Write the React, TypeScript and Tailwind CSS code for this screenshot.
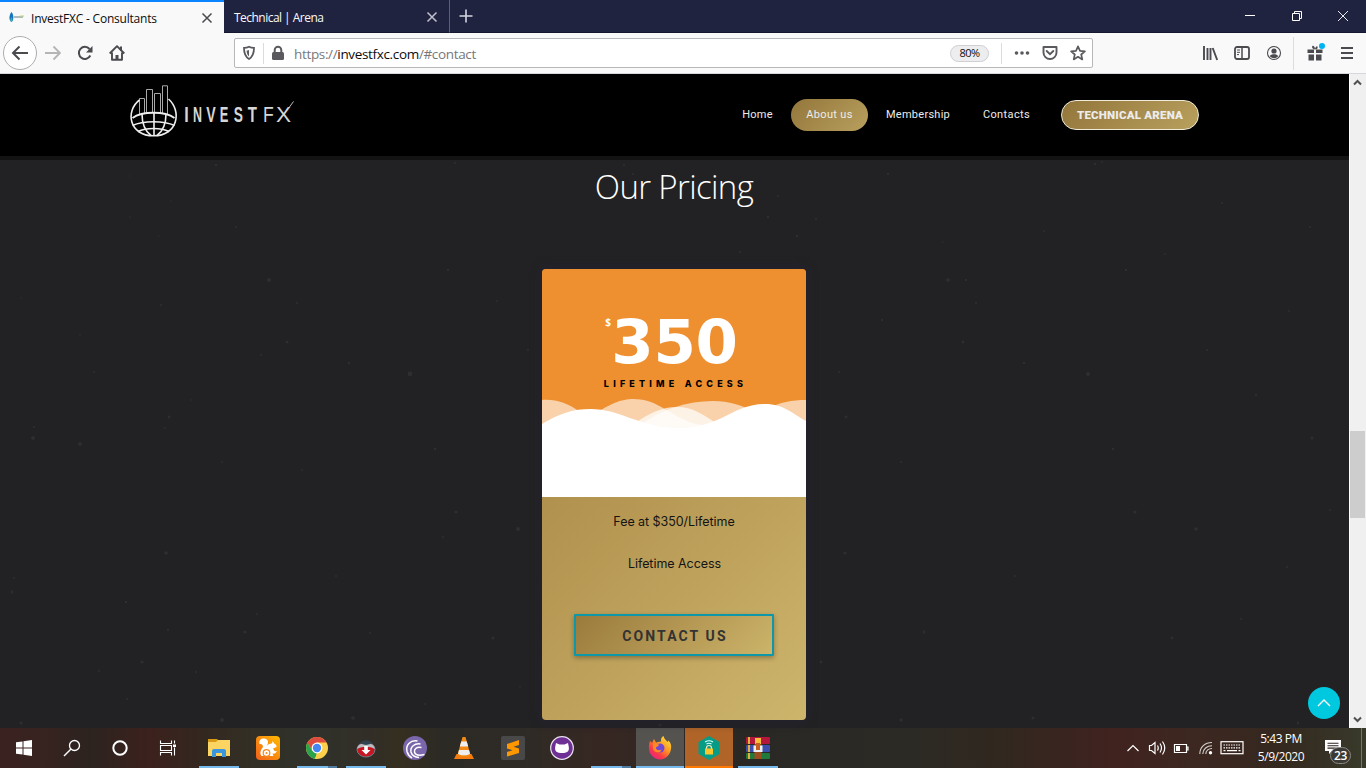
import type { ReactNode } from "react";

const specks: [number, number, number][] = [
  [216, 5, 1.2], [455, 3, 1], [236, 67, 1], [130, 57, 0.8], [130, 16, 0.7], [159, 76, 0.8], [171, 41, 0.7], [269, 120, 2.1],
  [297, 143, 1], [287, 182, 1.5], [448, 110, 1.2], [497, 141, 0.9], [528, 190, 1], [410, 214, 2.4], [349, 203, 1.2],
  [261, 195, 1], [161, 145, 1], [80, 175, 0.8], [21, 138, 0.8], [94, 212, 1], [33, 278, 1.9], [34, 267, 1], [80, 284, 1.9],
  [169, 257, 1.4], [165, 268, 0.9], [191, 240, 0.8], [222, 302, 0.9], [435, 289, 1.3], [302, 310, 0.9], [456, 352, 1.6],
  [518, 369, 2.1], [443, 377, 1], [166, 393, 1.8], [14, 418, 1], [12, 432, 1.4], [126, 442, 1.2], [336, 416, 1],
  [245, 472, 1.6], [168, 470, 1.1], [493, 478, 1.5], [370, 473, 1], [142, 502, 1.6], [99, 511, 1], [127, 539, 1.1],
  [222, 560, 2.1], [353, 558, 1.8], [21, 563, 1.6], [425, 544, 1], [196, 512, 1.1], [520, 527, 0.8], [257, 454, 0.9],
  [624, 5, 1], [633, 14, 1], [768, 57, 1.3], [797, 76, 1.3], [740, 92, 1], [659, 723, 1.3], [778, 36, 1],
  [816, 59, 1], [888, 14, 1.2], [943, 82, 0.8], [966, 120, 1.2], [1044, 71, 0.9], [1095, 4, 1.2], [1102, 2, 0.9],
  [1222, 43, 1.1], [1165, 94, 0.9], [1310, 67, 1], [882, 160, 1.1], [948, 120, 1.8], [976, 143, 1.1], [963, 182, 1.4],
  [1126, 110, 1.2], [1088, 214, 2], [1024, 203, 1.2], [1207, 190, 1.1], [1289, 151, 0.9], [1256, 235, 1.1], [1312, 278, 1.6],
  [839, 212, 1], [846, 257, 1.4], [901, 302, 1], [1113, 289, 1.2], [1135, 352, 1.5], [1196, 369, 1.8], [845, 393, 1.6],
  [1015, 416, 1], [924, 472, 1.4], [1172, 478, 1.4], [821, 502, 1.4], [1033, 558, 1.6], [901, 560, 1.7], [1298, 563, 1.4],
  [1241, 459, 1], [1287, 407, 1], [1330, 350, 1], [660, 565, 1.6],
];

const Svg = ({ w, h = w, vb, className = "", children }: { w: number; h?: number; vb?: string; className?: string; children: ReactNode }) => (
  <svg width={w} height={h} viewBox={vb ?? `0 0 ${w} ${h}`} fill="none" className={`block shrink-0 ${className}`}>{children}</svg>
);

function TabBar() {
  return (
    <div className="flex h-[33px] bg-[#202340] font-['Open_Sans',sans-serif] text-[12px]">
      <div className="flex h-full w-[224px] items-center border-t-2 border-[#0a84ff] bg-[#f9f9f9] pl-[9px] text-[#0c0c0d]">
        <Svg w={16}>
          <path d="M2.500 2C5 5 5 10 2.500 12C-.5 10 0 5 2.500 2Z" fill="#1673bd" />
          <path d="M2.500 7C4 9 3.500 11 2.500 12C1 11 1 9 2.500 7Z" fill="#35b6a5" />
          <path d="M5 7H14" stroke="#93a7ae" strokeWidth="1.500" />
          <path d="M11 6H15" stroke="#b9dc6a" strokeWidth="1" />
        </Svg>
        <span className="ml-[6px] w-[168px] whitespace-nowrap pt-[2px] tracking-[-0.22px]">InvestFXC - Consultants</span>
        <Svg w={16}><path d="M3.500 3.500l9 9M12.500 3.500l-9 9" stroke="#4a4a4f" strokeWidth="1.500" /></Svg>
      </div>
      <div className="flex h-full w-[226px] items-center border-b border-r border-b-[#15172e] border-r-[#5c5e78] pl-[10px] pt-px text-[#f9f9fa]">
        <span className="w-[190px] whitespace-nowrap pt-[2px] tracking-[-0.53px]">Technical | Arena</span>
        <Svg w={16}><path d="M3.500 3.500l9 9M12.500 3.500l-9 9" stroke="#c0c1cc" strokeWidth="1.500" /></Svg>
      </div>
      <div className="flex grow items-center border-b border-[#15172e] pl-2">
        <Svg w={16}><path d="M8 1.500v13M1.500 8h13" stroke="#d5d5de" strokeWidth="1.600" /></Svg>
      </div>
      <div className="flex w-[139px] items-center border-b border-[#15172e] text-white">
        <div className="flex w-[46px] justify-center"><Svg w={12}><path d="M1 5.500h10" stroke="#fff" /></Svg></div>
        <div className="flex w-[47px] justify-center"><Svg w={12}><path d="M1.500 3.500h7v7h-7zM3.500 3.500v-2h7v7h-2" stroke="#fff" /></Svg></div>
        <div className="flex w-[46px] justify-center"><Svg w={12}><path d="M1 1l10 10M11 1L1 11" stroke="#fff" strokeWidth=".9" /></Svg></div>
      </div>
    </div>
  );
}

function Toolbar() {
  return (
    <div className="flex h-[41px] items-center border-b border-[#d7d7db] bg-[#f9f9f9] pl-[3px] font-['Open_Sans',sans-serif]">
      <div className="flex h-[34px] w-[34px] items-center justify-center rounded-full border border-[#adadb0] bg-white">
        <Svg w={18}><path d="M17 9H2.500M8.500 2.500L2 9l6.500 6.500" stroke="#4a4a4f" strokeWidth="2" /></Svg>
      </div>
      <Svg w={16} className="ml-[8px]"><path d="M0 8h15M8.500 1.500L15 8l-6.500 6.500" stroke="#b5b5b8" strokeWidth="1.900" /></Svg>
      <Svg w={16} className="ml-[16px]">
        <path d="M13.300 10.500A6 6 0 1 1 12.500 4" stroke="#4a4a4f" strokeWidth="2" />
        <path d="M15.500 1v6.500H9z" fill="#4a4a4f" />
      </Svg>
      <Svg w={16} className="ml-[16px]">
        <path d="M.7 8.500L8 1.200l7.300 7.300M3 7.500V14.700h10V7.500" stroke="#4a4a4f" strokeWidth="1.900" strokeLinejoin="round" />
        <path d="M6.500 14.500V10h3v4.500zM11 1.500h2v4h-2z" fill="#4a4a4f" />
      </Svg>
      <div className="ml-[109px] flex h-[30px] w-[859px] items-center rounded-[2px] border border-[#b8b8bb] bg-white pl-[6px]">
        <Svg w={16}>
          <path d="M8 1.800c1.800.9 3.200 1.100 5 1.100 0 5-.8 8.500-5 11-4.200-2.500-5-6-5-11 1.800 0 3.200-.2 5-1.100z" stroke="#5a5a5e" strokeWidth="1.800" />
          <path d="M8 5c-.9.400-1.700.5-2.400.5.1 2.600.6 4.400 2.400 5.900z" fill="#5a5a5e" />
        </Svg>
        <div className="ml-[6px] h-[21px] w-px bg-[#dcdcdf]" />
        <Svg w={16} className="ml-[6px]">
          <rect x="2" y="7" width="12" height="8" rx="1.500" fill="#5a5a5e" />
          <path d="M4.700 8V5a3.300 3.300 0 0 1 6.600 0v3" stroke="#5a5a5e" strokeWidth="2" />
        </Svg>
        <span className="ml-[8px] grow whitespace-nowrap pt-[2px] text-[13.500px] tracking-[-0.34px] text-[#77777b]">https://<span className="text-[#0c0c0d]">investfxc.com</span>/#contact</span>
        <span className="mr-[12px] flex h-[17px] w-[39px] items-center justify-center rounded-full border border-[#cfcfd2] bg-[#ededf0] pt-px text-[11px] tracking-[-0.5px] text-[#0c0c0d]">80%</span>
        <div className="h-[21px] w-px bg-[#dcdcdf]" />
        <Svg w={18} className="ml-[10px]">
          <circle cx="4.500" cy="9" r="1.800" fill="#5a5a5e" /><circle cx="10" cy="9" r="1.800" fill="#5a5a5e" /><circle cx="15.500" cy="9" r="1.800" fill="#5a5a5e" />
        </Svg>
        <Svg w={16} className="ml-[12px]">
          <path d="M1.500 2h13v5.500a6.500 6.500 0 0 1-13 0z" stroke="#5a5a5e" strokeWidth="1.900" strokeLinejoin="round" />
          <path d="M4.700 6L8 9.200 11.300 6" stroke="#5a5a5e" strokeWidth="1.900" strokeLinecap="round" />
        </Svg>
        <Svg w={16} className="ml-[12px] mr-[6px]">
          <path d="M8 1.300l2 4.500 4.900.5-3.700 3.200 1.100 4.900L8 11.800l-4.300 2.600 1.100-4.900L1.100 6.300 6 5.800z" stroke="#5a5a5e" strokeWidth="1.700" strokeLinejoin="round" />
        </Svg>
      </div>
      <Svg w={16} className="ml-[109px]"><path d="M2 1v14M5.500 3v12M8.500 3v12M10.700 3l4.500 12" stroke="#4a4a4f" strokeWidth="1.900" /></Svg>
      <Svg w={16} className="ml-[16px]">
        <rect x="1" y="2" width="14" height="12" rx="2" stroke="#4a4a4f" strokeWidth="1.800" />
        <path d="M8 2v12" stroke="#4a4a4f" strokeWidth="1.500" /><path d="M3 5h3M3 7.300h3M3 9.600h2" stroke="#4a4a4f" />
      </Svg>
      <Svg w={16} className="ml-[16px]">
        <circle cx="8" cy="8" r="6.500" stroke="#4a4a4f" strokeWidth="1.100" />
        <circle cx="8" cy="6" r="2.600" fill="#4a4a4f" /><path d="M3.700 11C5 9.500 6.500 9.200 8 9.200s3 .3 4.300 1.800C11 12.700 9.500 13.200 8 13.200S5 12.700 3.700 11z" fill="#4a4a4f" />
      </Svg>
      <div className="ml-[11px] h-[33px] w-px bg-[#dcdcdf]" />
      <Svg w={24} className="ml-[9px]">
        <path d="M4.500 8.500h6.500v3.500H4.500zM13 8.500h6.500v3.500H13zM5.500 13.500H11V19.500H5.500zM13 13.500h5.500v6H13z" fill="#4a4a4f" />
        <path d="M12 8.500C10 8.500 8.500 6.500 9.300 5.300S12 5.500 12 8.500zM12 8.500c2 0 3-1.500 2.600-2.800s-2.600 0-2.600 2.800z" fill="#4a4a4f" />
        <circle cx="19" cy="5" r="3" fill="#00b3f4" />
      </Svg>
      <Svg w={16} className="ml-[12px]"><path d="M2 3h12M2 8h12M2 13h12" stroke="#4a4a4f" strokeWidth="2" /></Svg>
    </div>
  );
}

function Logo() {
  return (
    <svg width="170" height="60" viewBox="0 0 170 60" className="block shrink-0" fill="none">
      <path d="M9.500 30V14.500h5V29M16.500 29V5.500h6V29M24.500 29V9.500h6V29M32.500 30V1.800h5V31" stroke="#a9a9a9" strokeWidth="1" />
      <path d="M9.500 16C-5 27-1 51.800 23.500 51.800S52 27 38.500 15" stroke="#eee" strokeWidth="1.600" />
      <path d="M2.500 34C12 27 35 27 44.500 34" stroke="#eee" strokeWidth="1.800" />
      <path d="M2.500 41.500C13 36.500 34 36.500 44.500 41.500M8 47.500c8-4 23-4 31 0" stroke="#eee" strokeWidth="1.500" />
      <path d="M24 29v22.500M12 30c0 9 3 17 9 21.500M36 30c0 9-3 17-9 21.500" stroke="#eee" strokeWidth="1.600" />
      <g fill="#d6d6d6" fontFamily="Liberation Sans Narrow, Liberation Sans, sans-serif">
        <g fontWeight="700" fontSize="21.500" textAnchor="middle">
          <text transform="translate(56.500 38) scale(.75 1)">I</text>
          <text transform="translate(67.500 38) scale(.58 1)">N</text>
          <text transform="translate(81 38) scale(.66 1)">V</text>
          <text transform="translate(94 38) scale(.6 1)">E</text>
          <text transform="translate(108.500 38) scale(.64 1)">S</text>
          <text transform="translate(122.500 38) scale(.7 1)">T</text>
        </g>
        <text transform="translate(133 38) scale(.82 1)" fontSize="21.500">F</text>
        <text transform="translate(146 38) scale(1.050 1)" fontSize="21.500">X</text>
      </g>
      <path d="M158 25l5.500-7.500" stroke="#bdbdbd" strokeWidth="1" />
    </svg>
  );
}

function Header() {
  return (
    <header className="flex h-[86px] items-start border-b-4 border-[#131314] bg-black pl-[130px] font-[Roboto,sans-serif] text-[11px] tracking-[0.2px] text-[#ececec]">
      <div className="mt-[10px] w-[596px]"><Logo /></div>
      <nav className="mt-[25px] flex h-8 items-center">
        <a className="w-[65px] pr-[2px] pt-px text-center tracking-[0.25px]">Home</a>
        <a className="flex h-8 w-[77px] items-center justify-center rounded-full bg-linear-135 from-[#93763b] to-[#b8a05e] pt-px tracking-[0.35px]">About us</a>
        <a className="w-[100px] pt-px text-center tracking-[0.27px]">Membership</a>
        <a className="w-[78px] pr-px pt-px text-center tracking-[0.38px]">Contacts</a>
        <a className="ml-[15px] flex h-[30px] w-[138px] items-center justify-center rounded-full border border-[#f0ead8] bg-linear-135 from-[#93763b] to-[#b8a05e] pt-px text-[11.500px] font-black tracking-[0.2px]">TECHNICAL ARENA</a>
      </nav>
    </header>
  );
}

function PricingCard() {
  return (
    <div className="mt-[57px] flex h-[451px] w-[264px] flex-col overflow-hidden rounded-[4px] bg-linear-135 from-[#a3803f] to-[#cdb56c] shadow-[0_0_10px_2px_#24222f]">
      <div className="relative flex h-[228px] shrink-0 flex-col items-center bg-[#ef9030]">
        <svg width="264" height="100" viewBox="0 128 264 100" className="absolute bottom-0 left-0 block" fill="#fff">
          <path d="M0 131C14 130 25 134 38 143V170H0z" opacity=".6" />
          <path d="M45 150C68 134 80 130 91 130C112 130 122 141 137 148C147 153 154 156 163 156L160 170H45z" opacity=".6" />
          <path d="M93 154C108 144 120 138 135 138S161 145 178 157V170H93z" opacity=".7" />
          <path d="M95 158C120 140 145 132 171 132C187 132 200 136 212 143V170H95z" opacity=".6" />
          <path d="M225 140C238 133 250 131 264 131V160H225z" opacity=".6" />
          <path d="M0 155C18 144 32 140 48 140C80 140 95 158 136 159C180 159 190 135 223 135C242 135 251 145 264 152V228H0z" />
        </svg>
        <div className="mt-[37px] flex h-[72px] items-start pr-[5px] text-white">
          <span className="mt-[9px] w-[6px] font-['Noto_Sans',sans-serif] text-[10px] font-bold leading-[14px]">$</span>
          <span className="font-['DejaVu_Sans',sans-serif] text-[61px] font-bold leading-[72px] tracking-[-0.3px]">350</span>
        </div>
        <div className="whitespace-nowrap pl-[3px] font-[Inter,sans-serif] text-[9px] font-extrabold leading-[12px] tracking-[4.200px] text-black">LIFETIME ACCESS</div>
      </div>
      <div className="flex flex-col items-center pt-[15px] font-[Inter,sans-serif] text-[12.500px] leading-[20px] text-[#141414]">
        <span className="tracking-[-0.05px]">Fee at $350/Lifetime</span>
        <span className="mt-[22px] pl-px tracking-[-0.05px]">Lifetime Access</span>
        <button className="mt-[40px] flex h-[42px] w-[200px] items-center justify-center rounded-[1px] border-2 border-[#0d97a8] bg-linear-135 from-[#9b7b3c] to-[#ccb46a] pl-[2px] pt-px font-[Roboto,sans-serif] text-[14px] font-bold tracking-[2.100px] text-[#333] shadow-[0_2px_5px_rgba(0,0,0,.3)]">CONTACT US</button>
      </div>
    </div>
  );
}

function Page() {
  return (
    <div className="flex h-[654px]">
      <div className="relative flex w-[1349px] flex-col bg-[#222224]">
        <Header />
        <main className="relative flex grow flex-col items-center pr-px">
          <svg width="1349" height="568" viewBox="0 0 1349 568" className="absolute left-0 top-0" fill="#35363a">
            {specks.map(([x, y, r], i) => <circle key={i} cx={x} cy={y} r={r} opacity={0.65} />)}
          </svg>
          <h1 className="relative mt-[2px] whitespace-nowrap font-['Open_Sans',sans-serif] text-[33px] font-light leading-[50px] tracking-[-0.65px] text-white">Our Pricing</h1>
          <div className="relative"><PricingCard /></div>
        </main>
        <div className="absolute bottom-[9px] right-[9px] flex h-8 w-8 items-center justify-center rounded-full bg-[#00c8de]">
          <Svg w={16}><path d="M2 11l6-6 6 6" stroke="#fff" strokeWidth="1.400" /></Svg>
        </div>
      </div>
      <div className="flex w-[17px] flex-col items-center border-l border-white bg-[#f0f0f0] pr-px">
        <Svg w={9} className="mt-[4px]"><path d="M1 6.500L4.500 3 8 6.500" stroke="#505050" strokeWidth="2" /></Svg>
        <div className="mt-[344px] h-[87px] w-[15px] bg-[#cdcdcd]" />
        <Svg w={9} className="mb-[4px] mt-auto"><path d="M1 2.500L4.500 6 8 2.500" stroke="#505050" strokeWidth="2" /></Svg>
      </div>
    </div>
  );
}

function Slot({ children, className = "", line = "" }: { children?: ReactNode; className?: string; line?: string }) {
  return (
    <div className={`mr-px flex h-10 w-12 shrink-0 flex-col items-center ${className}`}>
      <div className="flex h-[38px] items-center pt-[2px]">{children}</div>
      {line === "split" ? (
        <div className="flex h-[2px] w-10"><div className="w-[31px] bg-[#76b9ed]" /><div className="w-[9px] bg-[#4f7c9e]" /></div>
      ) : <div className={`h-[2px] ${line}`} />}
    </div>
  );
}

function Taskbar() {
  return (
    <div className="flex h-10 bg-[linear-gradient(90deg,#3a2220_0px,#382320_40px,#2c231f_90px,#3c211d_150px,#33271f_200px,#332e24_240px,#2f322b_310px,#322e27_370px,#352f20_400px,#2c2a24_440px,#2e2b26_520px,#372722_600px,#2a2825_740px,#2b2a25_900px,#31281f_1000px,#40221f_1110px,#3d2721_1190px,#34281f_1280px,#383a2a_1366px)] font-['Open_Sans',sans-serif]">
      <div className="flex w-12 items-center justify-center"><Svg w={16}><path d="M0 2.300l6.500-.9V7.500H0zM7.500 1.200L16 0v7.500H7.500zM0 8.500h6.500v6.100L0 13.700zM7.500 8.500H16V16l-8.500-1.200z" fill="#fff" /></Svg></div>
      <div className="flex w-12 items-center justify-center"><Svg w={18}><circle cx="11.500" cy="6.500" r="5" stroke="#fff" strokeWidth="1.300" /><path d="M8 10L1 17" stroke="#fff" strokeWidth="1.400" /></Svg></div>
      <div className="flex w-12 items-center justify-center"><Svg w={16}><circle cx="8" cy="8" r="6.700" stroke="#fff" strokeWidth="2" /></Svg></div>
      <div className="mr-[3px] flex w-12 items-center justify-center"><Svg w={18}><path d="M1.500 1.500v3h11v-3M1.500 16.500v-3h11v3M1.500 6.500h11v5h-11zM15.500 1.500v3M15.500 8.500v8" stroke="#fff" strokeWidth="1.100" /><path d="M14 5.500h3v2.500h-3z" fill="#fff" /></Svg></div>
      <Slot line="w-10 bg-[#76b9ed]">
        <Svg w={22} h={20}><path d="M0 1h9l2 2v4H0z" fill="#d79b16" /><path d="M0 4h8l2-2h12v16H0z" fill="#fcd462" /><path d="M4 19v-6q0-2 2-2h10q2 0 2 2v6h-4v-4H8v4z" fill="#3a96dd" /></Svg>
      </Slot>
      <Slot>
        <Svg w={24}>
          <defs><linearGradient id="uc" x1="0" y1="1" x2="1" y2="0"><stop stopColor="#f2601b" /><stop offset="1" stopColor="#ffba00" /></linearGradient></defs>
          <rect width="24" height="24" rx="4" fill="url(#uc)" />
          <path d="M3.500 8C2.500 4 5.500 2 8.500 2.500c4 .7 4.500 4 2 8C12 8 14 7.300 16 7.500l.7-2.500 1.500 2.500c2 .8 2.500 2 2.300 3.500l-3.500 1.500c1 2 1.500 3 4 2.500-1 2-2.500 3-4.500 2.500l1 2.500H5.500c-2-2.500-1-6 1.500-9C7 8.500 5.500 7.500 3.500 8z" fill="#fff" />
          <circle cx="10.500" cy="17" r="3.300" stroke="#f78a20" strokeWidth="1.300" /><circle cx="10.500" cy="17" r="1" fill="#f78a20" />
        </Svg>
      </Slot>
      <Slot line="split">
        <Svg w={22}>
          <circle cx="11" cy="11" r="11" fill="#fcd04b" />
          <path d="M1.500 5.500A11 11 0 0 1 20.500 5.500H11L6.300 13.700z" fill="#dd4b3e" />
          <path d="M1.500 5.500L6.300 13.700 11 16.500 9 21.800A11 11 0 0 1 1.500 5.500z" fill="#2ba24c" />
          <path d="M11 16l4.500-2.500L11 22H9z" fill="#fcd04b" />
          <circle cx="11" cy="11" r="5.400" fill="#fff" /><circle cx="11" cy="11" r="4.200" fill="#4386f4" />
        </Svg>
      </Slot>
      <Slot line="w-10 bg-[#76b9ed]">
        <Svg w={20}>
          <ellipse cx="10" cy="11.500" rx="9" ry="7.500" fill="#c71622" stroke="#6f7f8b" />
          <path d="M1.200 11C1.500 3 18.500 3 18.800 11 14 8 6 8 1.200 11z" fill="#b8bec2" />
          <path d="M3.500 5.500C7 1 13 1 16.500 5.500L10 7z" fill="#32434f" />
          <path d="M8.200 8h3.600v4h2.700L10 16.500 5.500 12h2.700z" fill="#fff" />
        </Svg>
      </Slot>
      <Slot>
        <Svg w={24}>
          <circle cx="12" cy="12" r="12" fill="#7a66ab" />
          <path d="M14.500 5C7 4 2.500 9 4 15.500c.8 3 2.500 5 5 6.500M17.500 8C11.500 7 7 11 8 16c1 3.500 4 5.300 8 5.500M18.500 11.500c-4.500-1-7.500 1-7 4.500.8 3 4 4 10 2.500" stroke="#fff" strokeWidth="1.500" />
        </Svg>
      </Slot>
      <Slot>
        <Svg w={20} h={24}>
          <path d="M2.500 18h15l2.500 5H0z" fill="#f47b0e" /><path d="M8.500 1h3l5 18c-3 2.500-10 2.500-13 0z" fill="#f48a16" />
          <path d="M7.200 5.500h5.600l1.400 5H5.800zM5 14h10l1 3.800c-3 2-9 2-12 0z" fill="#eee" />
        </Svg>
      </Slot>
      <Slot>
        <Svg w={24}><rect width="24" height="24" rx="2" fill="#484848" /><path d="M18 4v5l-5.500 1.800L18 12.500V17L6 20.500V16l5.500-1.800L6 12.500V8z" fill="#ff9800" /></Svg>
      </Slot>
      <Slot>
        <Svg w={24}>
          <circle cx="12" cy="12" r="11.300" fill="#6e3094" stroke="#e9e2ee" strokeWidth="1.200" />
          <path d="M6 7l3.500 1.500h5L18 7l.8 4c.8 4.500-2 6-6.800 6s-7.600-1.500-6.800-6z" fill="#fff" />
        </Svg>
      </Slot>
      <Slot line="split" />
      <Slot className="bg-[#555350]" line="w-12 bg-[#76b9ed]">
        <Svg w={24}>
          <defs><linearGradient id="fx" x1="1" y1="0" x2=".2" y2="1"><stop stopColor="#fff04a" /><stop offset=".45" stopColor="#ff9a20" /><stop offset=".75" stopColor="#fb3a45" /><stop offset="1" stopColor="#e8208c" /></linearGradient></defs>
          <path d="M2 5l2 2 2-4 2 3.500 5-1c-.5-3 1-5 2.500-5.500.5 3 3 4 4 6l1-1.500C23 7 23.500 10 23 13c-1 6-5.500 10.500-11 10.500S1.500 19 1 13c-.3-3 .2-6 1-8z" fill="url(#fx)" />
          <circle cx="12" cy="12" r="4.500" fill="#6f48d8" />
          <path d="M5 7l6 1.500c0 2-3 2-3 3.500 0 2 3 3 5.500 1.500C13 18 5 17 5 12z" fill="#ff8a24" />
        </Svg>
      </Slot>
      <Slot className="bg-[#b06428]" line="w-12 bg-[#ff7800]">
        <Svg w={22} h={24}>
          <path d="M11 0l10.500 6v12L11 24 .5 18V6z" fill="#079c86" />
          <path d="M7 6q4-2.500 8 0M8.500 8q2.500-1.500 5 0" stroke="#d5ffff" strokeWidth="1.100" />
          <path d="M8.500 13v-1a2.500 2.500 0 0 1 5 0V13" stroke="#f3e7bd" strokeWidth="1.200" /><rect x="7" y="12.500" width="8" height="6" fill="#fac52b" />
        </Svg>
      </Slot>
      <Slot line="w-10 bg-[#76b9ed]">
        <Svg w={24}>
          <rect y="1" width="24" height="7" rx="1" fill="#b3183c" /><rect y="9" width="24" height="7" rx="1" fill="#3d4fae" /><rect y="17" width="24" height="6" rx="1" fill="#217a3b" />
          <path d="M2 1h2v7H2zM2 9h2v7H2zM2 17h2v6H2z" fill="#e1b23d" />
          <path d="M8.500 8h7v15h-7z" fill="#9c4e1e" /><path d="M9 2h6v6H9z" fill="#f7bf3c" /><path d="M7.500 9.500h9V16h-9z" fill="#eee" /><path d="M10 7h4v7h-4z" fill="#c45f1d" />
        </Svg>
      </Slot>
      <div className="flex grow items-center justify-end">
        <Svg w={12}><path d="M.5 9L6 3.500 11.500 9" stroke="#fff" strokeWidth="1.200" /></Svg>
        <Svg w={18} className="ml-[9px]"><path d="M1.500 6.500h2L7 3.500v11l-3.500-3h-2zM9.500 6.500q1.500 2.500 0 5M12 4.500q3 4.500 0 9M14.500 2.500q4.500 6.500 0 13" stroke="#fff" strokeWidth="1.200" /></Svg>
        <Svg w={16} className="ml-[7px]"><path d="M1.500 4.500h12v8h-12zM13.500 7h1.500v3h-1.500" stroke="#fff" strokeWidth="1.200" /><path d="M3 6h4v5H3z" fill="#fff" /></Svg>
        <Svg w={14} className="ml-[10px]"><path d="M.8 13C.8 6 6 1.500 13 1.500M3.800 13C3.800 8 8 4.700 13 4.700M6.800 13c0-3.500 3-5.500 6.200-5.500" stroke="#d5d2cf" strokeWidth="1.100" /><circle cx="11.500" cy="11.800" r="1.700" fill="#fff" /></Svg>
        <Svg w={24} h={14} className="ml-[7px]"><rect x="1" y=".7" width="22" height="12" stroke="#fff" strokeWidth="1.200" /><path d="M3.500 4h17M3.500 6.800h17" stroke="#fff" strokeWidth="1.200" strokeDasharray="1.500 1" /><path d="M3.500 9.600h2M7 9.600h10M18.500 9.600h2" stroke="#fff" strokeWidth="1.200" /></Svg>
        <div className="ml-[7px] w-[60px] whitespace-nowrap text-center text-[12px] leading-[18px] tracking-[-0.45px] text-white">5:43 PM<br />5/9/2020</div>
        <div className="relative ml-[13px] h-10 w-[37px]">
          <Svg w={17} h={16} className="mt-[12px]"><path d="M1 0h16v11H8l-3 3v-3H1z" fill="#fff" /><path d="M3.500 3.300h11M3.500 5.700h11M3.500 8.100h8" stroke="#2d2822" strokeWidth="1.100" /></Svg>
          <span className="absolute left-[6px] top-[19px] flex h-[17px] w-[21px] items-center justify-center rounded-full border border-[#8b8985] bg-[#3b3a35] text-[12px] font-semibold tracking-[-0.3px] text-white">23</span>
        </div>
        <div className="mr-[4px] h-10 w-px bg-[#77756a]" />
      </div>
    </div>
  );
}

export default function App() {
  return (
    <div className="flex h-[768px] w-[1366px] flex-col overflow-hidden">
      <TabBar />
      <Toolbar />
      <Page />
      <Taskbar />
    </div>
  );
}
